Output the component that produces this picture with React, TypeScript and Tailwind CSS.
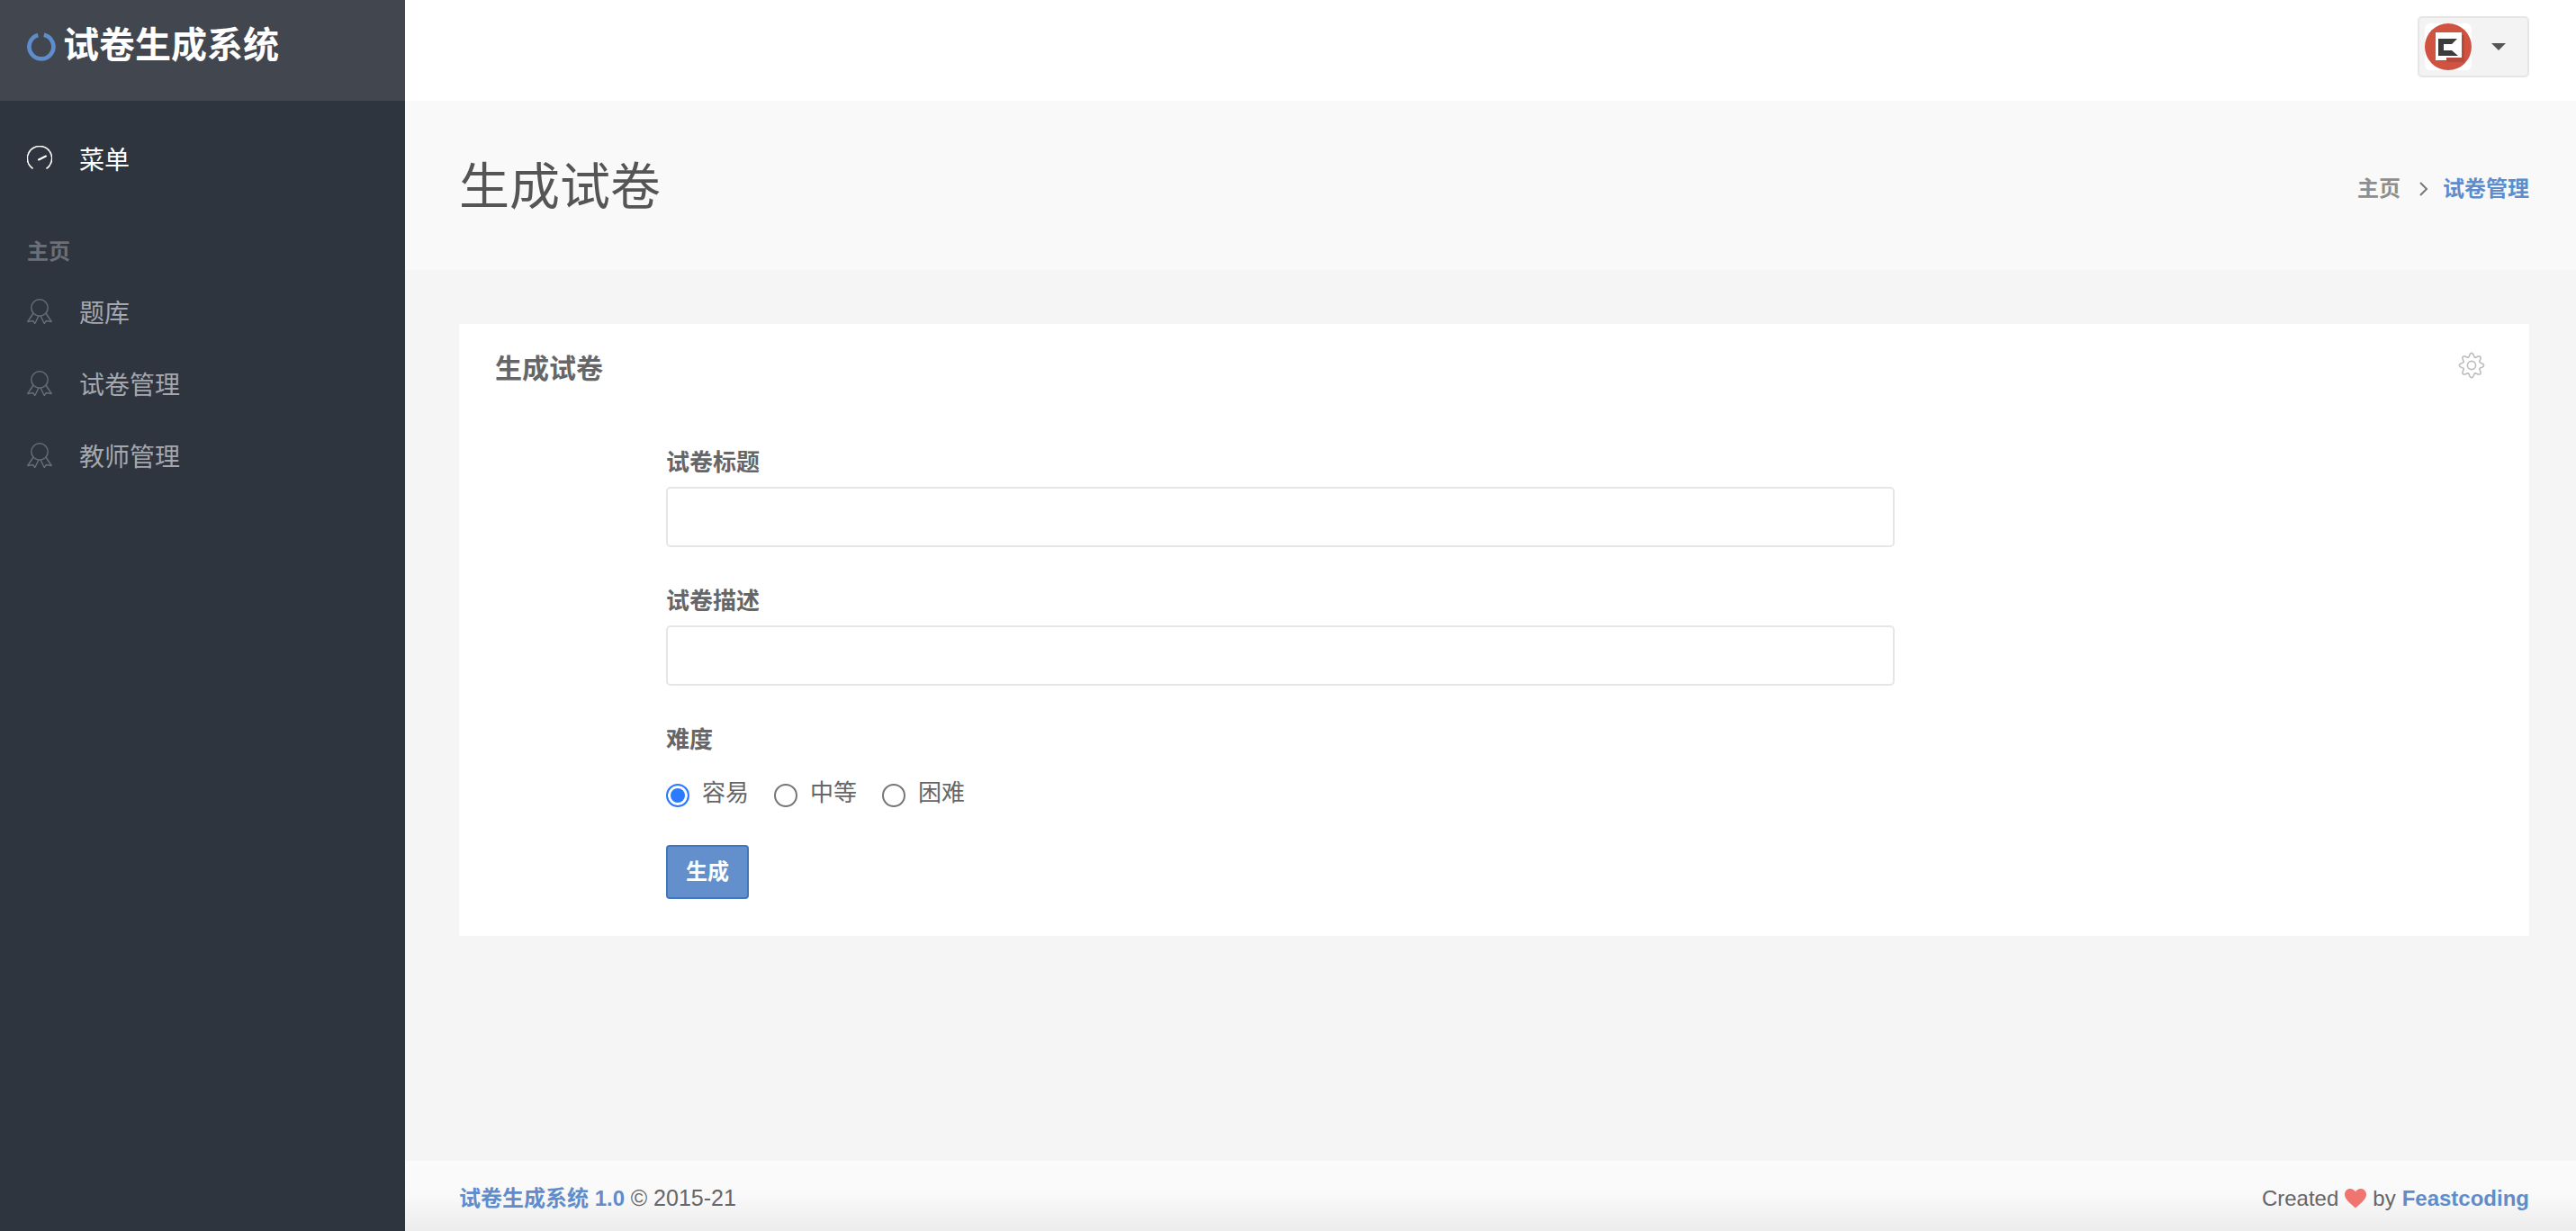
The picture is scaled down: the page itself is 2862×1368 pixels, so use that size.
import { useMemo } from "react";

const FONT = "font-['Liberation_Sans','Noto_Sans_CJK_SC',sans-serif]";

function BadgeIcon() {
  return (
    <svg width="28" height="28" viewBox="0 0 28 28" fill="none" stroke="#666c74" strokeWidth="1.5" strokeLinejoin="round" className="-mt-[7px] shrink-0">
      <circle cx="14" cy="10" r="9.2" />
      <path d="M7 16 L0.8 25.5 L6.5 24.5 L8.8 27.5 L13 19" />
      <path d="M21 16 L27.2 25.5 L21.5 24.5 L19.2 27.5 L15 19" />
    </svg>
  );
}

function SpeedIcon() {
  return (
    <svg width="28" height="28" viewBox="0 0 28 28" fill="none" stroke="#fff" strokeWidth="1.6" strokeLinecap="round" className="-mt-[6px] shrink-0">
      <path d="M6 25 A13.6 13.6 0 1 1 22 25" strokeDasharray="6.5 1.4" />
      <path d="M13 15.5 L21 11.5" strokeWidth="2" />
    </svg>
  );
}

function GearIcon() {
  const d = useMemo(() => {
    const pts: string[] = [];
    for (let i = 0; i < 160; i++) {
      const a = (i / 160) * Math.PI * 2;
      const r = 11.6 + 2 * Math.cos(a * 8);
      pts.push(`${(15 + r * Math.cos(a)).toFixed(2)} ${(15 + r * Math.sin(a)).toFixed(2)}`);
    }
    return "M" + pts.join(" L") + " Z";
  }, []);
  return (
    <svg width="30" height="30" viewBox="0 0 30 30" fill="none" stroke="#bcbcbc" strokeWidth="1.6">
      <path d={d} />
      <circle cx="15" cy="15" r="4.6" />
    </svg>
  );
}

function Avatar() {
  return (
    <svg width="52" height="52" viewBox="0 0 52 52" className="rounded-[6px] bg-white">
      <circle cx="26" cy="26" r="26" fill="#cf5340" />
      <path d="M15 13 H44 V43 H25 V42 H15 Z" fill="#a8483a" opacity="0.7" />
      <path d="M12 10 H41 V38 H24 V41 H12 Z" fill="#fff" />
      <path d="M15 17 H36 L30 23 H21 V30 H30 L37 36 H15 Z" fill="#3c3c3c" />
    </svg>
  );
}

function NavItem({ label }: { label: string }) {
  return (
    <div className="flex h-[80px] items-center pl-[30px]">
      <BadgeIcon />
      <span className="ml-[30px] text-[28px] text-[#a4a8ae]">{label}</span>
    </div>
  );
}

function Field({ label }: { label: string }) {
  return (
    <div className="mb-[39px]">
      <label className="mb-[6px] block text-[26px] leading-[42px] font-bold text-[#666]">{label}</label>
      <input type="text" className="block h-[67px] w-full rounded-[5px] border-2 border-[#e6e6e6] bg-white outline-none" />
    </div>
  );
}

function Radio({ label, checked }: { label: string; checked?: boolean }) {
  return (
    <label className="mr-[28px] flex items-center">
      <input
        type="radio"
        name="level"
        defaultChecked={checked}
        className="m-0 h-[26px] w-[26px] appearance-none rounded-full border-2 border-[#767676] bg-white checked:border-[#2b7bff] checked:bg-[#2b7bff] checked:shadow-[inset_0_0_0_3px_#fff]"
      />
      <span className="relative -top-[3px] ml-[14px] text-[26px] leading-[36px] text-[#666]">{label}</span>
    </label>
  );
}

export default function App() {
  return (
    <div className={`${FONT} flex h-screen overflow-hidden bg-[#f5f5f5] text-[#666]`}>
      <aside className="w-[450px] shrink-0 bg-[#2e353f]">
        <div className="flex h-[112px] items-start bg-[#42474f] pt-[28px] pl-[30px]">
          <svg width="32" height="32" viewBox="0 0 34 34" fill="none" stroke="#5f8dcb" strokeWidth="5" className="mt-[8px] shrink-0">
            <path d="M20 3 A14.3 14.3 0 1 1 13 3.2" />
          </svg>
          <span className="ml-[8px] text-[40px] leading-[44px] font-bold text-white">试卷生成系统</span>
        </div>
        <div className="mt-[27px] flex h-[80px] items-center pl-[30px]">
          <SpeedIcon />
          <span className="ml-[30px] text-[28px] text-white">菜单</span>
        </div>
        <div className="mt-[41px] pl-[30px] text-[24px] leading-[40px] font-bold text-[#6b7078]">主页</div>
        <div className="mt-[9px]">
          <NavItem label="题库" />
          <NavItem label="试卷管理" />
          <NavItem label="教师管理" />
        </div>
      </aside>

      <div className="flex min-w-0 flex-1 flex-col">
        <header className="flex h-[112px] items-start justify-end bg-white pt-[18px] pr-[52px]">
          <button className="flex h-[68px] w-[124px] items-center rounded-[5px] border-2 border-[#e6e6e6] bg-[#f3f3f3] pl-[6px]">
            <Avatar />
            <span className="ml-[22px] h-0 w-0 border-x-[8px] border-t-[8px] border-x-transparent border-t-[#555]" />
          </button>
        </header>

        <div className="flex h-[188px] items-center justify-between bg-[#f9f9f9] pr-[52px] pl-[60px]">
          <h1 className="mt-[3px] text-[56px] leading-[70px] font-normal text-[#555]">生成试卷</h1>
          <div className="mt-[8px] flex items-center text-[24px]">
            <span className="font-bold text-[#8e8e8e]">主页</span>
            <svg width="12" height="20" viewBox="0 0 12 20" fill="none" stroke="#777" strokeWidth="2" className="mr-[15px] ml-[20px]">
              <path d="M2 3 L9 10 L2 17" />
            </svg>
            <span className="font-bold text-[#5f8dcb]">试卷管理</span>
          </div>
        </div>

        <main className="flex-1 px-[60px] pt-[60px] pr-[52px]">
          <section className="bg-white pb-[41px]">
            <div className="flex items-start justify-between pt-[28px] pr-[49px] pl-[40px]">
              <h2 className="text-[30px] leading-[44px] font-bold text-[#666]">生成试卷</h2>
              <div className="mt-[3px]">
                <GearIcon />
              </div>
            </div>
            <form className="mt-[61px] ml-[230px] w-[1365px]">
              <Field label="试卷标题" />
              <Field label="试卷描述" />
              <div className="mt-[1px]">
                <div className="text-[26px] leading-[42px] font-bold text-[#666]">难度</div>
                <div className="mt-[23px] flex items-center">
                  <Radio label="容易" checked />
                  <Radio label="中等" />
                  <Radio label="困难" />
                </div>
              </div>
              <button type="button" className="mt-[37px] block h-[60px] w-[92px] rounded-[4px] border-2 border-[#4177bd] bg-[#638fcd] text-[24px] font-bold text-white">
                生成
              </button>
            </form>
          </section>
        </main>

        <footer className="flex h-[78px] items-center justify-between bg-gradient-to-b from-[#fbfbfb] via-[#f9f9f9] to-[#ececec] pt-[6px] pr-[52px] pl-[60px] text-[24px]">
          <div>
            <span className="font-bold text-[#5f8dcb]">试卷生成系统 1.0</span> <span className="text-[25px]">© 2015-21</span>
          </div>
          <div className="flex items-center">
            Created
            <svg width="24" height="22" viewBox="0 0 24 22" fill="#f07470" className="mx-[7px]">
              <path d="M12 21.5 C8 17.5 0 12.5 0 6.5 C0 2.5 3 0 6 0 C8.5 0 10.8 1.3 12 3.5 C13.2 1.3 15.5 0 18 0 C21 0 24 2.5 24 6.5 C24 12.5 16 17.5 12 21.5 Z" />
            </svg>
            by<span className="ml-[7px] font-bold text-[#5f8dcb]">Feastcoding</span>
          </div>
        </footer>
      </div>
    </div>
  );
}
